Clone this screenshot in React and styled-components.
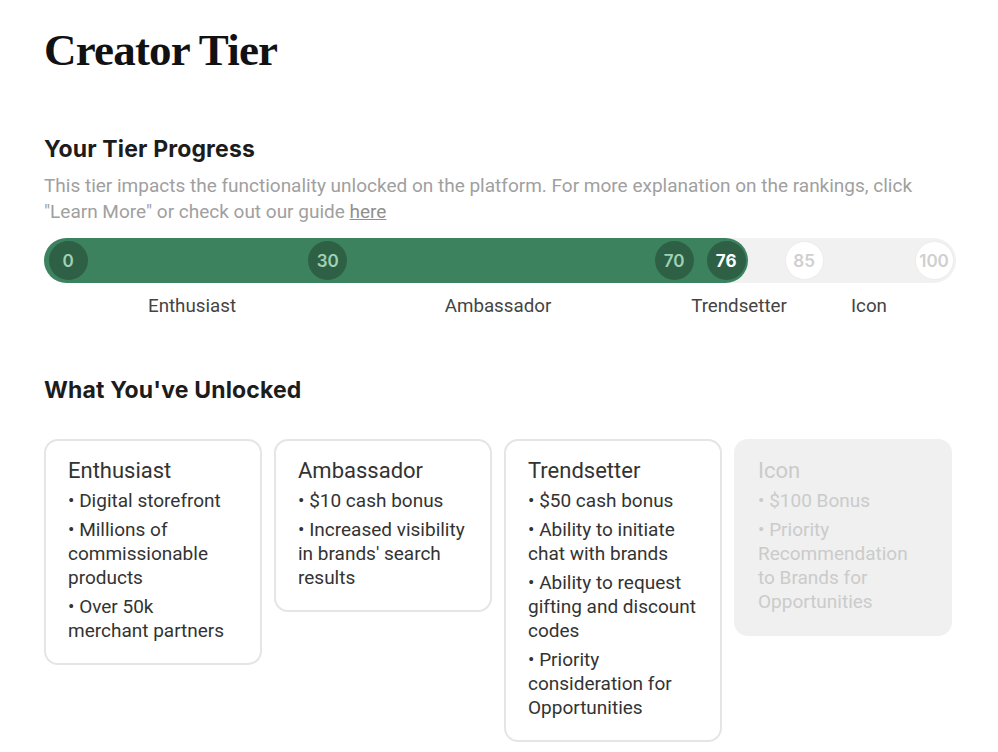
import React from "react";
import styled, { createGlobalStyle } from "styled-components";

const Global = createGlobalStyle`
  html, body { margin: 0; padding: 0; background: #fff; }
  body { font-family: "Roboto", "Inter", sans-serif; color: #222; }
  * { box-sizing: border-box; }
`;

const Page = styled.div`
  width: 998px;
  padding: 22px 42px 40px 44px;
`;

const Title = styled.h1`
  margin: 0;
  font-family: "Liberation Serif", "DejaVu Serif", serif;
  font-weight: 700;
  font-size: 45px;
  line-height: 56px;
  letter-spacing: -0.8px;
  color: #111;
`;

const SectionTitle = styled.h2`
  margin: ${(p) => p.$top}px 0 0;
  font-family: "Inter", "Roboto", sans-serif;
  font-size: 23px;
  font-weight: 700;
  line-height: 30px;
  letter-spacing: 0.15px;
  color: #1c1c1c;
`;

const Description = styled.p`
  margin: 9px 0 0;
  font-size: 19px;
  line-height: 26px;
  color: #a0a0a0;
  max-width: 912px;
`;

const Link = styled.a`
  color: #8f8f8f;
  text-decoration: underline;
`;

const Track = styled.div`
  position: relative;
  margin-top: 13px;
  width: 912px;
  height: 45px;
  border-radius: 23px;
  background: #f1f1f1;
`;

const Fill = styled.div`
  height: 45px;
  border-radius: 23px;
  background: #3c825e;
`;

const Marker = styled.div`
  position: absolute;
  top: 3px;
  width: 39px;
  height: 39px;
  margin-left: -19.5px;
  border-radius: 50%;
  display: flex;
  align-items: center;
  justify-content: center;
  font-family: "Inter", sans-serif;
  font-size: 17px;
  background: ${(p) => (p.$reached ? "#2e6045" : "#fff")};
  color: ${(p) => (p.$current ? "#fff" : p.$reached ? "#9fd2b4" : "#cfcfcf")};
  font-weight: ${(p) => (p.$current ? 700 : 600)};
  border: ${(p) => (p.$reached ? "none" : "1px solid #ececec")};
`;

const LabelRow = styled.div`
  position: relative;
  width: 912px;
  height: 46px;
`;

const TierLabel = styled.span`
  position: absolute;
  top: 11px;
  transform: translateX(-50%);
  font-size: 18.75px;
  line-height: 24px;
  color: #444;
  white-space: nowrap;
`;

const Cards = styled.div`
  display: flex;
  align-items: flex-start;
  gap: 12px;
  margin-top: 34px;
`;

const Card = styled.div`
  width: 218px;
  padding: 16px 22.5px 20px 22px;
  border-radius: 14px;
  border: 2px solid ${(p) => (p.$locked ? "#f0f0f0" : "#e5e5e5")};
  background: ${(p) => (p.$locked ? "#f0f0f0" : "#fff")};
  color: ${(p) => (p.$locked ? "#cbcbcb" : "#333")};
`;

const CardTitle = styled.div`
  font-size: 22px;
  line-height: 28px;
  margin-bottom: 4px;
  white-space: nowrap;
`;

const Perks = styled.ul`
  list-style: none;
  margin: 0;
  padding: 0;
  display: flex;
  flex-direction: column;
  gap: 5px;
`;

const Perk = styled.li`
  font-size: 19px;
  line-height: 24px;
`;

const START = 24;
const SPAN = 866;
const pos = (v) => START + (SPAN * v) / 100;

const markers = [0, 30, 70, 76, 85, 100];
const current = 76;

const tiers = [
  { name: "Enthusiast", center: 148 },
  { name: "Ambassador", center: 454 },
  { name: "Trendsetter", center: 695 },
  { name: "Icon", center: 825 },
];

const cards = [
  {
    name: "Enthusiast",
    perks: ["Digital storefront", "Millions of commissionable products", "Over 50k merchant partners"],
  },
  {
    name: "Ambassador",
    perks: ["$10 cash bonus", "Increased visibility in brands' search results"],
  },
  {
    name: "Trendsetter",
    perks: [
      "$50 cash bonus",
      "Ability to initiate chat with brands",
      "Ability to request gifting and discount codes",
      "Priority consideration for Opportunities",
    ],
  },
  {
    name: "Icon",
    locked: true,
    perks: ["$100 Bonus", "Priority Recommendation to Brands for Opportunities"],
  },
];

export default function App() {
  return (
    <Page>
      <Global />
      <Title>Creator Tier</Title>
      <SectionTitle $top={56}>Your Tier Progress</SectionTitle>
      <Description>
        This tier impacts the functionality unlocked on the platform. For more explanation on the rankings, click
        "Learn More" or check out our guide <Link href="#">here</Link>
      </Description>
      <Track>
        <Fill style={{ width: `${pos(current) + 22}px` }} />
        {markers.map((m) => (
          <Marker
            key={m}
            style={{ left: `${pos(m)}px` }}
            $reached={m <= current}
            $current={m === current}
          >
            {m}
          </Marker>
        ))}
      </Track>
      <LabelRow>
        {tiers.map((t) => (
          <TierLabel key={t.name} style={{ left: `${t.center}px` }}>
            {t.name}
          </TierLabel>
        ))}
      </LabelRow>
      <SectionTitle $top={46}>What You've Unlocked</SectionTitle>
      <Cards>
        {cards.map((c) => (
          <Card key={c.name} $locked={c.locked}>
            <CardTitle>{c.name}</CardTitle>
            <Perks>
              {c.perks.map((p) => (
                <Perk key={p}>• {p}</Perk>
              ))}
            </Perks>
          </Card>
        ))}
      </Cards>
    </Page>
  );
}
